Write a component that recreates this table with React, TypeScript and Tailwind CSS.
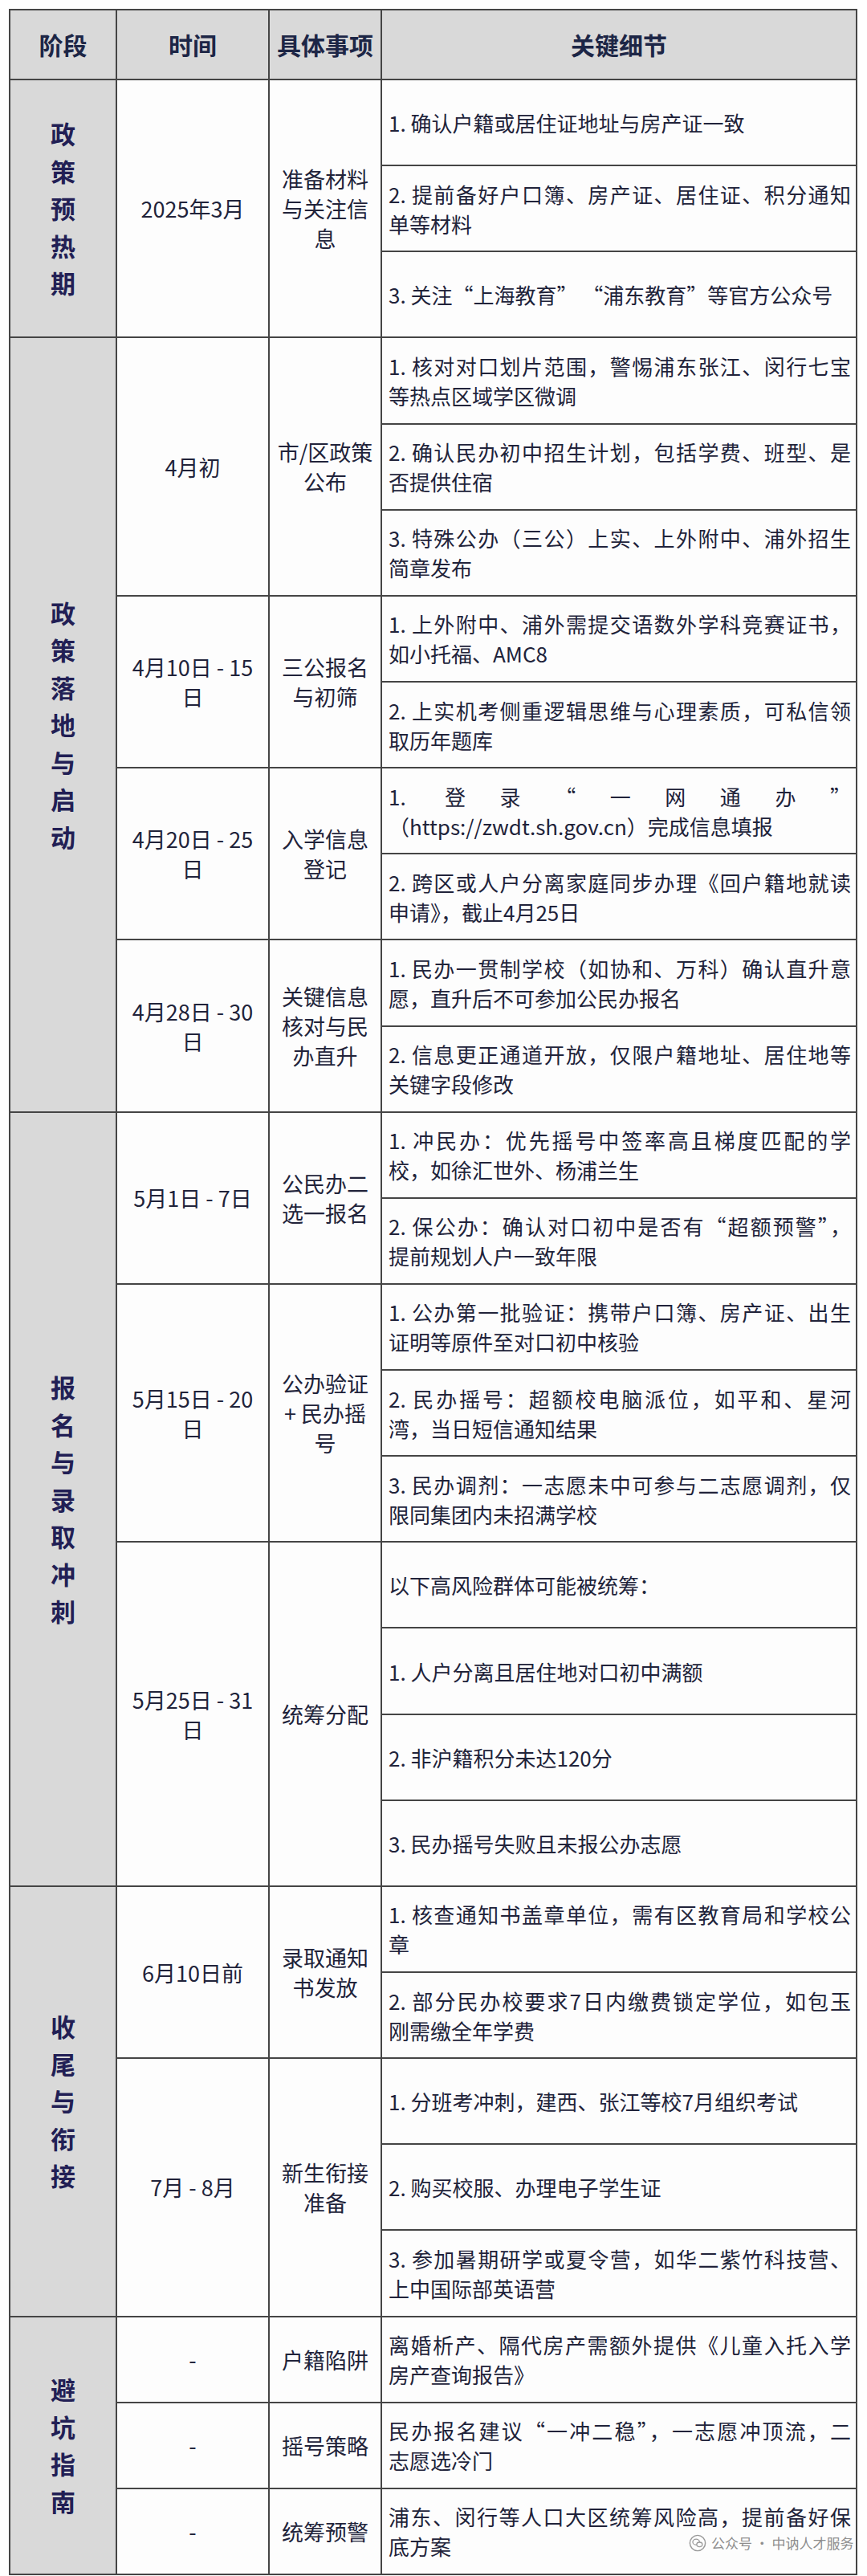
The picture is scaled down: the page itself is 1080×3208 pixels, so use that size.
import React from "react";

type Group = { time: string[]; item: string[]; details: string[][] };
type Section = { phase: string; groups: Group[] };

const sections: Section[] = [
  {
    phase: "政策预热期",
    groups: [
      {
        time: ["2025年3月"],
        item: ["准备材料", "与关注信", "息"],
        details: [
          ["1. 确认户籍或居住证地址与房产证一致"],
          ["2. 提前备好户口簿、房产证、居住证、积分通知", "单等材料"],
          ["3. 关注“上海教育” “浦东教育”等官方公众号"],
        ],
      },
    ],
  },
  {
    phase: "政策落地与启动",
    groups: [
      {
        time: ["4月初"],
        item: ["市/区政策", "公布"],
        details: [
          ["1. 核对对口划片范围，警惕浦东张江、闵行七宝", "等热点区域学区微调"],
          ["2. 确认民办初中招生计划，包括学费、班型、是", "否提供住宿"],
          ["3. 特殊公办（三公）上实、上外附中、浦外招生", "简章发布"],
        ],
      },
      {
        time: ["4月10日 - 15", "日"],
        item: ["三公报名", "与初筛"],
        details: [
          ["1. 上外附中、浦外需提交语数外学科竞赛证书，", "如小托福、AMC8"],
          ["2. 上实机考侧重逻辑思维与心理素质，可私信领", "取历年题库"],
        ],
      },
      {
        time: ["4月20日 - 25", "日"],
        item: ["入学信息", "登记"],
        details: [
          ["1. 登录“一网通办”", "（https://zwdt.sh.gov.cn）完成信息填报"],
          ["2. 跨区或人户分离家庭同步办理《回户籍地就读", "申请》，截止4月25日"],
        ],
      },
      {
        time: ["4月28日 - 30", "日"],
        item: ["关键信息", "核对与民", "办直升"],
        details: [
          ["1. 民办一贯制学校（如协和、万科）确认直升意", "愿，直升后不可参加公民办报名"],
          ["2. 信息更正通道开放，仅限户籍地址、居住地等", "关键字段修改"],
        ],
      },
    ],
  },
  {
    phase: "报名与录取冲刺",
    groups: [
      {
        time: ["5月1日 - 7日"],
        item: ["公民办二", "选一报名"],
        details: [
          ["1. 冲民办：优先摇号中签率高且梯度匹配的学", "校，如徐汇世外、杨浦兰生"],
          ["2. 保公办：确认对口初中是否有“超额预警”，", "提前规划人户一致年限"],
        ],
      },
      {
        time: ["5月15日 - 20", "日"],
        item: ["公办验证", "+ 民办摇", "号"],
        details: [
          ["1. 公办第一批验证：携带户口簿、房产证、出生", "证明等原件至对口初中核验"],
          ["2. 民办摇号：超额校电脑派位，如平和、星河", "湾，当日短信通知结果"],
          ["3. 民办调剂：一志愿未中可参与二志愿调剂，仅", "限同集团内未招满学校"],
        ],
      },
      {
        time: ["5月25日 - 31", "日"],
        item: ["统筹分配"],
        details: [
          ["以下高风险群体可能被统筹："],
          ["1. 人户分离且居住地对口初中满额"],
          ["2. 非沪籍积分未达120分"],
          ["3. 民办摇号失败且未报公办志愿"],
        ],
      },
    ],
  },
  {
    phase: "收尾与衔接",
    groups: [
      {
        time: ["6月10日前"],
        item: ["录取通知", "书发放"],
        details: [
          ["1. 核查通知书盖章单位，需有区教育局和学校公", "章"],
          ["2. 部分民办校要求7日内缴费锁定学位，如包玉", "刚需缴全年学费"],
        ],
      },
      {
        time: ["7月 - 8月"],
        item: ["新生衔接", "准备"],
        details: [
          ["1. 分班考冲刺，建西、张江等校7月组织考试"],
          ["2. 购买校服、办理电子学生证"],
          ["3. 参加暑期研学或夏令营，如华二紫竹科技营、", "上中国际部英语营"],
        ],
      },
    ],
  },
  {
    phase: "避坑指南",
    groups: [
      {
        time: ["-"],
        item: ["户籍陷阱"],
        details: [["离婚析产、隔代房产需额外提供《儿童入托入学", "房产查询报告》"]],
      },
      {
        time: ["-"],
        item: ["摇号策略"],
        details: [["民办报名建议“一冲二稳”，一志愿冲顶流，二", "志愿选冷门"]],
      },
      {
        time: ["-"],
        item: ["统筹预警"],
        details: [["浦东、闵行等人口大区统筹风险高，提前备好保", "底方案"]],
      },
    ],
  },
];

const span: Record<number, string> = {
  1: "row-span-1",
  2: "row-span-2",
  3: "row-span-3",
  4: "row-span-4",
  5: "row-span-5",
  9: "row-span-9",
};

function Lines({ lines }: { lines: string[] }) {
  return (
    <>
      {lines.map((l, i) => (
        <div key={i} className="whitespace-nowrap">
          {l}
        </div>
      ))}
    </>
  );
}

function DetailCell({ lines }: { lines: string[] }) {
  return (
    <div className="col-start-4 flex flex-col justify-center bg-[#fdfdfd] pl-[8px] pr-[6px] text-[26px] leading-[37px] text-[#21233a]">
      {lines.map((l, i) => (
        <div
          key={i}
          className={
            i < lines.length - 1
              ? "text-justify [text-align-last:justify]"
              : "text-left"
          }
        >
          {l}
        </div>
      ))}
    </div>
  );
}

function WeChatMark() {
  return (
    <svg width="22" height="22" viewBox="0 0 24 24" fill="none">
      <circle cx="12" cy="12" r="10.5" stroke="#9a9a9a" strokeWidth="1.6" />
      <ellipse cx="10" cy="10.5" rx="4.6" ry="3.8" stroke="#9a9a9a" strokeWidth="1.4" />
      <ellipse cx="14.6" cy="14" rx="3.8" ry="3.1" stroke="#9a9a9a" strokeWidth="1.4" fill="#fdfdfd" />
    </svg>
  );
}

export default function App() {
  return (
    <div className="relative min-h-[3208px] bg-white font-['Noto_Sans_CJK_SC','Noto_Sans',sans-serif]">
      <div className="pl-[11px] pt-[11px]">
        <div className="grid h-[3196px] w-[1057px] grid-cols-[131px_188px_138px_590px] grid-rows-[85px_repeat(29,minmax(0,1fr))] gap-[2px] bg-[#454545] p-[2px]">
          {["阶段", "时间", "具体事项", "关键细节"].map((h) => (
            <div
              key={h}
              className="flex items-center justify-center bg-[#d9d9d9] text-[30px] font-bold text-[#1d2646]"
            >
              {h}
            </div>
          ))}

          {sections.map((s) => {
            const total = s.groups.reduce((n, g) => n + g.details.length, 0);
            return (
              <React.Fragment key={s.phase}>
                <div
                  className={`col-start-1 ${span[total]} flex flex-col items-center justify-center bg-[#d9d9d9] text-[31px] font-bold leading-[46.5px] text-[#221f55]`}
                >
                  {s.phase.split("").map((c, i) => (
                    <div key={i}>{c}</div>
                  ))}
                </div>
                {s.groups.map((g, gi) => (
                  <React.Fragment key={gi}>
                    <div
                      className={`col-start-2 ${span[g.details.length]} flex flex-col items-center justify-center bg-[#fdfdfd] text-center text-[27px] leading-[37px] text-[#21233a]`}
                    >
                      <Lines lines={g.time} />
                    </div>
                    <div
                      className={`col-start-3 ${span[g.details.length]} flex flex-col items-center justify-center bg-[#fdfdfd] text-center text-[27px] leading-[37px] text-[#21233a]`}
                    >
                      <Lines lines={g.item} />
                    </div>
                    {g.details.map((d, di) => (
                      <DetailCell key={di} lines={d} />
                    ))}
                  </React.Fragment>
                ))}
              </React.Fragment>
            );
          })}
        </div>
      </div>

      <div className="absolute left-[858px] top-[3155px] flex items-center gap-[6px] text-[17px] leading-[24px] text-[#8e8e8e]">
        <WeChatMark />
        <span>公众号 · 中讷人才服务</span>
      </div>
    </div>
  );
}
